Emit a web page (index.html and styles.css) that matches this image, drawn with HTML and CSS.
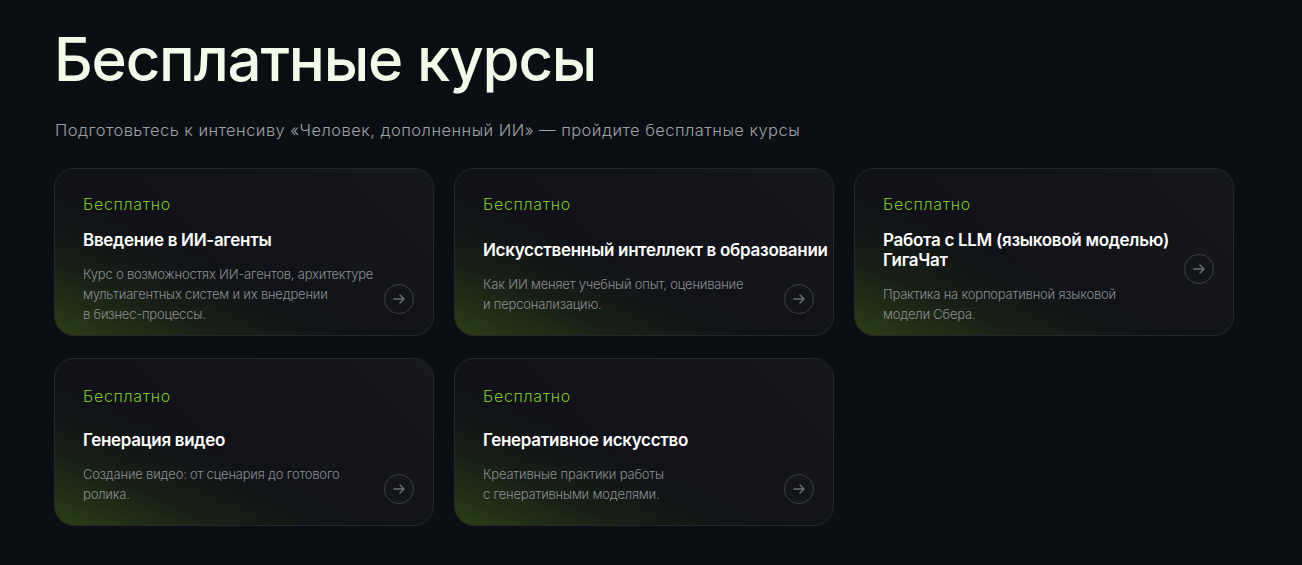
FILE: index.html
```html
<!DOCTYPE html>
<html lang="ru">
<head>
<meta charset="utf-8">
<title>Бесплатные курсы</title>
<link rel="stylesheet" href="styles.css">
</head>
<body>
<section class="section">
  <h1 class="heading">Бесплатные курсы</h1>
  <p class="lead">Подготовьтесь к интенсиву «Человек, дополненный ИИ» — пройдите бесплатные курсы</p>
  <div class="grid">
    <a class="card">
      <span class="badge">Бесплатно</span>
      <div class="body">
        <div class="text">
          <h3 class="title">Введение в ИИ-агенты</h3>
          <p class="desc">Курс о возможностях ИИ-агентов, архитектуре<br>мультиагентных систем и их внедрении<br>в бизнес-процессы.</p>
        </div>
        <span class="arrow"><svg viewBox="0 0 16 16" width="16" height="16"><path d="M3 8h10M9 4l4 4-4 4" fill="none" stroke="currentColor" stroke-width="1.3" stroke-linecap="round" stroke-linejoin="round"/></svg></span>
      </div>
    </a>
    <a class="card">
      <span class="badge">Бесплатно</span>
      <div class="body">
        <div class="text">
          <h3 class="title">Искусственный интеллект в образовании</h3>
          <p class="desc">Как ИИ меняет учебный опыт, оценивание<br>и персонализацию.</p>
        </div>
        <span class="arrow"><svg viewBox="0 0 16 16" width="16" height="16"><path d="M3 8h10M9 4l4 4-4 4" fill="none" stroke="currentColor" stroke-width="1.3" stroke-linecap="round" stroke-linejoin="round"/></svg></span>
      </div>
    </a>
    <a class="card card--tall">
      <span class="badge">Бесплатно</span>
      <div class="body">
        <div class="text">
          <h3 class="title">Работа с LLM (языковой моделью)<br>ГигаЧат</h3>
          <p class="desc">Практика на корпоративной языковой<br>модели Сбера.</p>
        </div>
        <span class="arrow"><svg viewBox="0 0 16 16" width="16" height="16"><path d="M3 8h10M9 4l4 4-4 4" fill="none" stroke="currentColor" stroke-width="1.3" stroke-linecap="round" stroke-linejoin="round"/></svg></span>
      </div>
    </a>
    <a class="card card--low">
      <span class="badge">Бесплатно</span>
      <div class="body">
        <div class="text">
          <h3 class="title">Генерация видео</h3>
          <p class="desc">Создание видео: от сценария до готового<br>ролика.</p>
        </div>
        <span class="arrow"><svg viewBox="0 0 16 16" width="16" height="16"><path d="M3 8h10M9 4l4 4-4 4" fill="none" stroke="currentColor" stroke-width="1.3" stroke-linecap="round" stroke-linejoin="round"/></svg></span>
      </div>
    </a>
    <a class="card card--low">
      <span class="badge">Бесплатно</span>
      <div class="body">
        <div class="text">
          <h3 class="title">Генеративное искусство</h3>
          <p class="desc">Креативные практики работы<br>с генеративными моделями.</p>
        </div>
        <span class="arrow"><svg viewBox="0 0 16 16" width="16" height="16"><path d="M3 8h10M9 4l4 4-4 4" fill="none" stroke="currentColor" stroke-width="1.3" stroke-linecap="round" stroke-linejoin="round"/></svg></span>
      </div>
    </a>
  </div>
</section>
</body>
</html>
```
FILE: styles.css
```css
* { box-sizing: border-box; }
html, body { margin: 0; padding: 0; }
body {
  background: #0b0e13;
  font-family: "Inter", "Noto Sans", sans-serif;
  color: #f2f8ec;
  width: 1302px;
  height: 565px;
  overflow: hidden;
}
.section {
  padding: 23px 0 0 54px;
}
.heading {
  margin: 0;
  font-size: 60px;
  line-height: 72px;
  font-weight: 500;
  letter-spacing: -1.2px;
  color: #f1fbea;
}
.lead {
  margin: 25px 0 0 1px;
  font-size: 16.5px;
  line-height: 20px;
  font-weight: 300;
  letter-spacing: 0.45px;
  color: #9ea2a6;
}
.grid {
  margin-top: 28px;
  display: grid;
  grid-template-columns: repeat(3, 380px);
  grid-auto-rows: 168px;
  column-gap: 20px;
  row-gap: 22px;
}
.card {
  display: flex;
  flex-direction: column;
  padding: 24px 19px 18px 28px;
  border: 1px solid #24272c;
  border-radius: 20px;
  background:
    linear-gradient(to top right, rgba(70, 108, 20, 0.5) 0%, rgba(54, 86, 16, 0.2) 22%, rgba(40, 60, 15, 0) 42%),
    linear-gradient(225deg, #17191e 0%, #111318 45%, #0f1116 100%);
  text-decoration: none;
}
.badge {
  font-size: 16px;
  line-height: 22px;
  font-weight: 300;
  letter-spacing: 0.7px;
  color: #7cc41c;
}
.card--low .badge {
  margin-top: 2px;
  margin-bottom: -2px;
}
.body {
  flex: 1;
  min-height: 0;
  margin-top: 21px;
  display: grid;
  grid-template-areas: "stack";
  grid-template-columns: minmax(0, 1fr);
  grid-template-rows: minmax(0, 1fr);
}
.text {
  grid-area: stack;
  align-self: center;
}
.title {
  margin: 0;
  font-size: 17px;
  line-height: 20px;
  font-weight: 600;
  letter-spacing: -0.3px;
  white-space: nowrap;
  color: #ffffff;
}
.desc {
  margin: 14px 0 0;
  font-size: 13px;
  line-height: 20px;
  font-weight: 300;
  letter-spacing: -0.2px;
  color: #8b8e93;
}
.arrow {
  grid-area: stack;
  justify-self: end;
  align-self: end;
  width: 30px;
  height: 30px;
  margin-bottom: 3px;
  border: 1px solid #3a3d42;
  border-radius: 50%;
  display: flex;
  align-items: center;
  justify-content: center;
  color: #6c6f74;
}
.card--tall .arrow {
  margin-bottom: 33px;
}
```
